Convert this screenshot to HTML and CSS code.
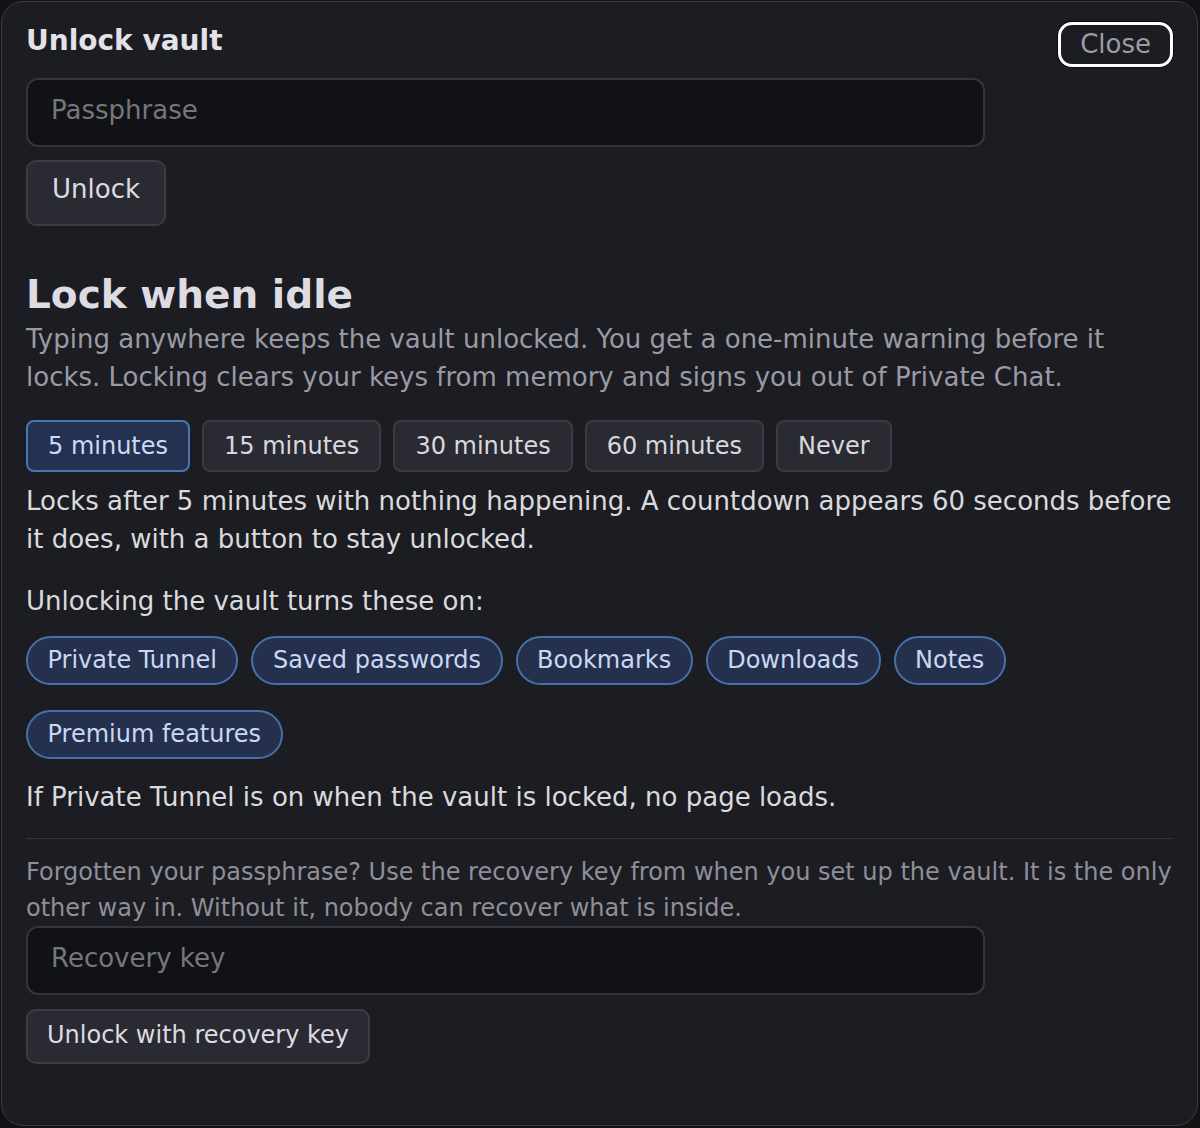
FILE: index.html
```html
<!DOCTYPE html>
<html lang="en">
<head>
<meta charset="utf-8">
<title>Unlock vault</title>
<link rel="stylesheet" href="styles.css">
</head>
<body>
<div class="panel">
  <div class="header">
    <h1 class="title">Unlock vault</h1>
    <button class="close">Close</button>
  </div>
  <div class="field first"><span class="placeholder">Passphrase</span></div>
  <button class="btn big">Unlock</button>

  <h2 class="heading">Lock when idle</h2>
  <p class="desc">Typing anywhere keeps the vault unlocked. You get a one-minute warning before it locks. Locking clears your keys from memory and signs you out of Private Chat.</p>

  <div class="chips">
    <button class="chip selected">5 minutes</button>
    <button class="chip">15 minutes</button>
    <button class="chip">30 minutes</button>
    <button class="chip">60 minutes</button>
    <button class="chip">Never</button>
  </div>
  <p class="text after-chips">Locks after 5 minutes with nothing happening. A countdown appears 60 seconds before it does, with a button to stay unlocked.</p>

  <p class="text turns">Unlocking the vault turns these on:</p>
  <div class="pills">
    <span class="pill">Private Tunnel</span>
    <span class="pill">Saved passwords</span>
    <span class="pill">Bookmarks</span>
    <span class="pill">Downloads</span>
    <span class="pill">Notes</span>
    <span class="pill">Premium features</span>
  </div>
  <p class="text tunnel">If Private Tunnel is on when the vault is locked, no page loads.</p>

  <hr class="rule">
  <p class="small">Forgotten your passphrase? Use the recovery key from when you set up the vault. It is the only other way in. Without it, nobody can recover what is inside.</p>
  <div class="field"><span class="placeholder">Recovery key</span></div>
  <button class="btn recovery">Unlock with recovery key</button>
</div>
</body>
</html>
```

FILE: styles.css
```css
* { box-sizing: border-box; }

html, body {
  margin: 0;
  padding: 0;
  background: #121215;
}

body {
  font-family: "DejaVu Sans", "Liberation Sans", sans-serif;
  color: #dadade;
  padding: 1px 2px 2px 1px;
}

.panel {
  height: 1125px;
  background: #1c1d22;
  border: 1px solid #3a3b43;
  border-radius: 22px;
  padding: 22px 24px;
  display: flex;
  flex-direction: column;
  align-items: flex-start;
}

.header {
  width: 100%;
  display: flex;
  justify-content: space-between;
  align-items: flex-start;
}

.title {
  margin: 1px 0 0;
  font-size: 28px;
  line-height: 32px;
  font-weight: bold;
  color: #e2e2e8;
}

.close {
  margin-top: -2px;
  height: 45px;
  padding: 0 19px 2px;
  font-family: inherit;
  font-size: 26px;
  color: #9c9ca6;
  background: #1c1d22;
  border: 3px solid #ffffff;
  border-radius: 14px;
  box-shadow: 0 0 0 1px #0c0c0e;
}

.field {
  width: 959px;
  height: 69px;
  background: #111215;
  border: 2px solid #34353c;
  border-radius: 12px;
  padding: 0 23px 6px;
  display: flex;
  align-items: center;
}

.field.first { margin-top: 11px; }

.placeholder {
  font-size: 26px;
  color: #76767d;
}

.btn {
  font-family: inherit;
  color: #dcdce1;
  background: #2a2b32;
  border: 2px solid #3b3c44;
  border-radius: 10px;
}

.btn.big {
  margin-top: 13px;
  height: 66px;
  padding: 0 24px 8px;
  font-size: 26px;
}

.heading {
  margin: 45px 0 0;
  font-size: 39px;
  line-height: 48px;
  font-weight: bold;
  color: #dcdce2;
}

.desc {
  margin: 1px 0 0;
  font-size: 26px;
  line-height: 38px;
  color: #9a9aa4;
}

.chips {
  margin-top: 24px;
  display: flex;
  gap: 12px;
}

.chip {
  height: 52px;
  padding: 0 20px;
  font-family: inherit;
  font-size: 24px;
  color: #d8d8dd;
  background: #2a2b32;
  border: 2px solid #3a3b43;
  border-radius: 8px;
}

.chip.selected {
  background: #243150;
  border-color: #4a74b2;
  color: #c9dbf7;
}

.text {
  margin: 0;
  font-size: 26px;
  line-height: 38px;
  color: #dadade;
}

.after-chips { margin-top: 10px; }
.turns { margin-top: 24px; }

.pills {
  margin-top: 16px;
  display: flex;
  flex-wrap: wrap;
  column-gap: 13px;
  row-gap: 25px;
}

.pill {
  height: 49px;
  padding: 0 19.5px 1px;
  display: flex;
  align-items: center;
  font-size: 24px;
  color: #c8d8f4;
  background: #25304d;
  border: 2px solid #4670a8;
  border-radius: 25px;
}

.tunnel { margin-top: 19px; }

.rule {
  width: 100%;
  margin: 22px 0 0;
  border: 0;
  border-top: 1px solid #34353d;
}

.small {
  margin: 15px 0 0;
  font-size: 24px;
  line-height: 36px;
  color: #8f8f99;
}

.btn.recovery {
  margin-top: 14px;
  height: 55px;
  padding: 0 19px 3px;
  font-size: 24px;
}
```
